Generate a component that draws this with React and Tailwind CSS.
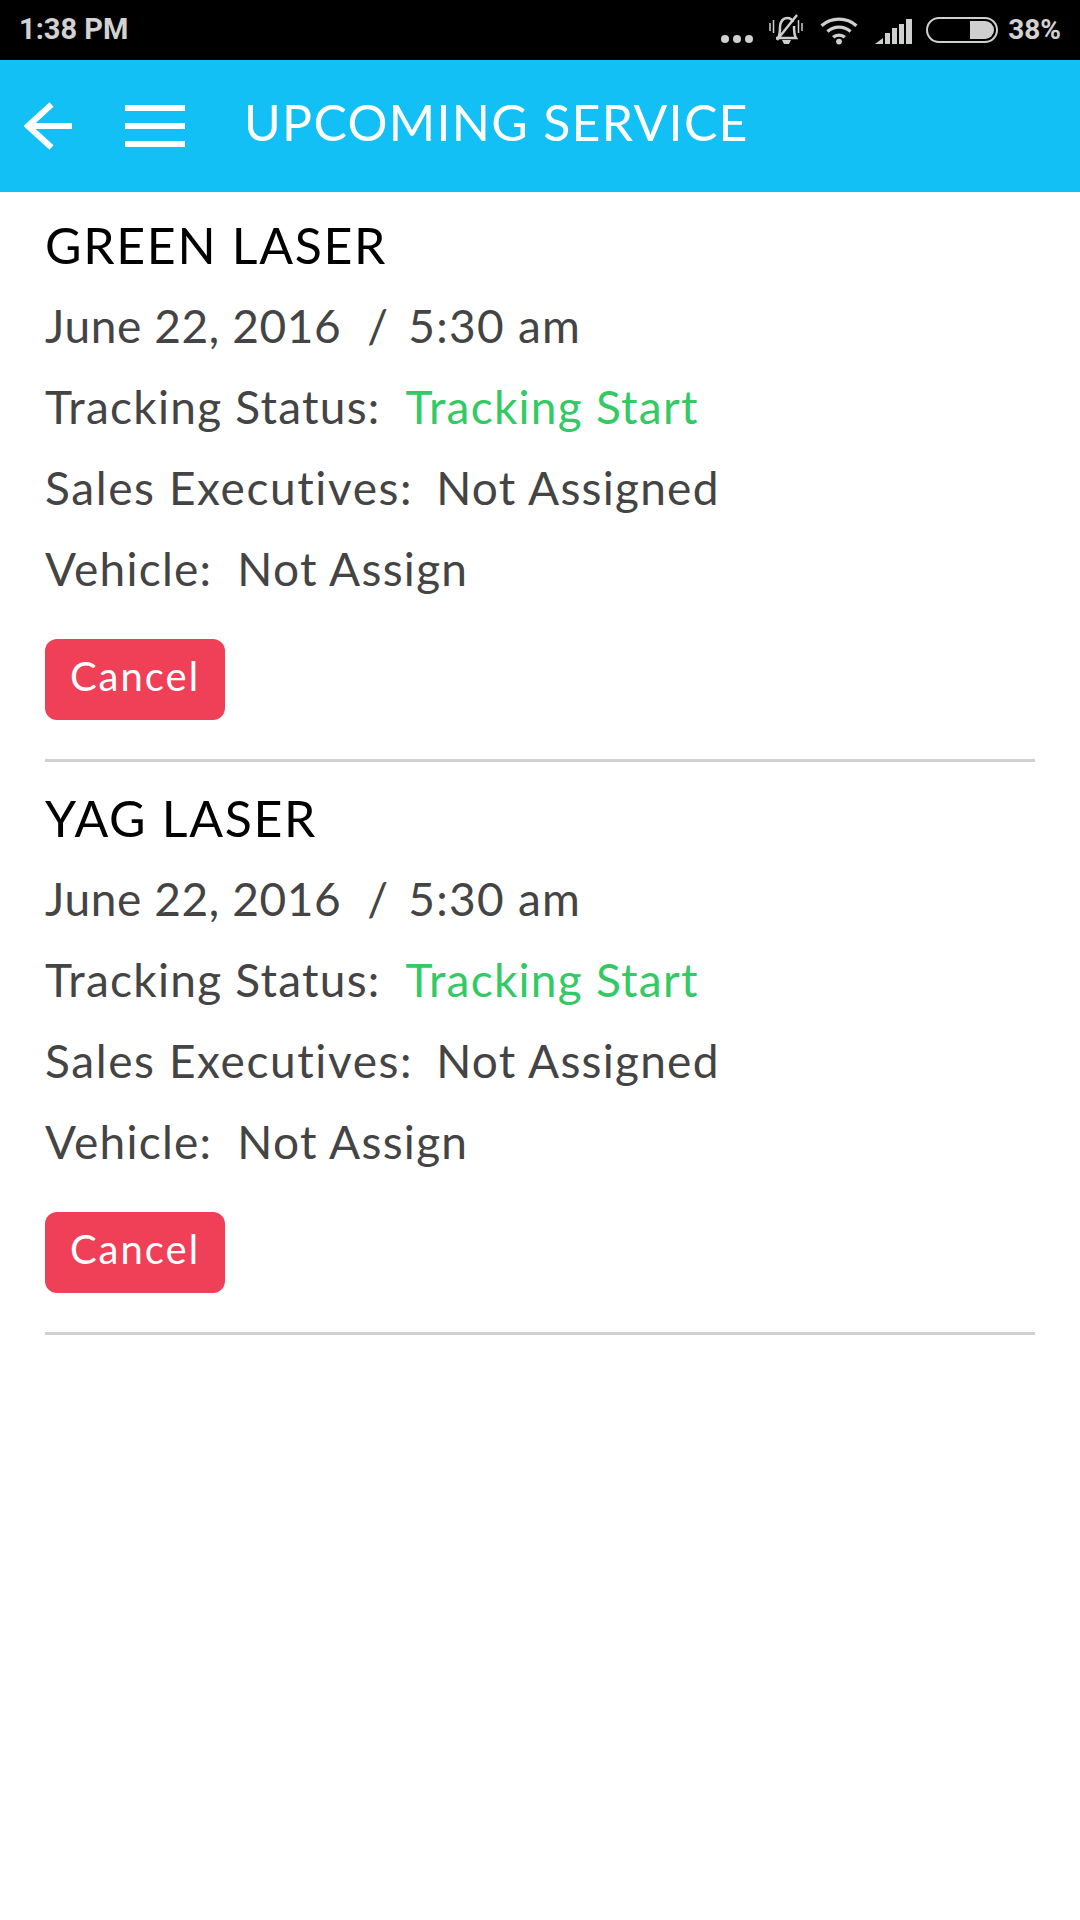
import React from "react";

const services = [
  { name: "GREEN LASER" },
  { name: "YAG LASER" },
];

function BackIcon() {
  return (
    <svg width="50" height="48" viewBox="0 0 50 48" fill="none" stroke="white" strokeWidth="6">
      <path d="M48 24H4" />
      <path d="M27.5 2.5L4 24L27.5 45.5" strokeLinecap="butt" />
    </svg>
  );
}

function MenuIcon() {
  return (
    <div className="flex flex-col justify-between w-[60px] h-[42px]">
      <div className="h-[6px] bg-white" />
      <div className="h-[6px] bg-white" />
      <div className="h-[6px] bg-white" />
    </div>
  );
}

function SilentBell() {
  return (
    <svg width="34" height="32" viewBox="0 0 34 32" fill="none" stroke="#cfcfcf" strokeWidth="2.5">
      <path d="M9 24c2-3 2-6 2-11 0-5 3-9 7-9 3 0 5 1 6 4M25 12c0 6 0 9 2 12H7" />
      <path d="M13 26h9l-2 4h-5z" fill="#cfcfcf" stroke="none" />
      <path d="M28 1L8 26" />
      <path d="M1 9v8M4.500 6v13M29.500 6v13M33 9v8" strokeWidth="1.5" />
    </svg>
  );
}

function WifiIcon() {
  return (
    <svg width="40" height="29" viewBox="0 0 40 30" fill="none" stroke="#cfcfcf" strokeWidth="3.500">
      <path d="M2 10c10-9 26-9 36 0" />
      <path d="M8 16c7-6 17-6 24 0" />
      <path d="M14 22c3-3 9-3 12 0" />
      <circle cx="20" cy="26.500" r="3" fill="#cfcfcf" stroke="none" />
    </svg>
  );
}

function SignalIcon() {
  return (
    <svg width="37" height="25" viewBox="0 0 37 25" fill="#cfcfcf">
      <path d="M0 25l8-6v6z" />
      <rect x="10" y="14" width="5" height="11" />
      <rect x="17" y="9" width="5" height="16" />
      <rect x="24" y="5" width="5" height="20" />
      <rect x="31" y="0" width="6" height="25" />
    </svg>
  );
}

function BatteryIcon() {
  return (
    <div className="w-[72px] h-[26px] rounded-full border-2 border-[#cfcfcf] flex justify-end p-[2px]">
      <div className="w-[24px] h-full bg-[#cfcfcf] rounded-r-full" />
    </div>
  );
}

function StatusBar() {
  return (
    <div className="h-[60px] bg-black flex items-center justify-between pl-[19px] pr-[19px] text-[#d2d2d2] font-['Roboto',sans-serif] font-bold text-[29px]">
      <span>1:38 PM</span>
      <div className="flex items-center">
        <div className="flex gap-[4px] mt-[18px] mr-[16px]">
          <span className="w-[8px] h-[8px] rounded-full bg-[#cfcfcf]" />
          <span className="w-[8px] h-[8px] rounded-full bg-[#cfcfcf]" />
          <span className="w-[8px] h-[8px] rounded-full bg-[#cfcfcf]" />
        </div>
        <div className="mr-[16px]"><SilentBell /></div>
        <div className="mr-[16px]"><WifiIcon /></div>
        <div className="mr-[14px] mt-[2px]"><SignalIcon /></div>
        <div className="mr-[10px]"><BatteryIcon /></div>
        <span className="text-[28px]">38%</span>
      </div>
    </div>
  );
}

function Row({ label, labelClass = "tracking-[1.25px] mr-[25px]", children }) {
  return (
    <div className="h-[81px] flex items-center text-[46px] tracking-[1.25px] text-[#444444]">
      {label && <span className={labelClass}>{label}</span>}
      {children}
    </div>
  );
}

function ServiceCard({ name }) {
  return (
    <div className="mx-[45px] mb-[3px] border-b-[3px] border-[#d0d0d0] h-[570px]">
      <div className="h-[93px] pt-[27px] leading-[52px] text-[50px] tracking-[1.7px] text-black">{name}</div>
      <div>
        <Row>
          <span className="tracking-[0.6px]">June 22, 2016</span>
          <span className="ml-[26px] mr-[19px]">/</span>
          <span>5:30 am</span>
        </Row>
        <Row label="Tracking Status:">
          <span className="text-[#33c964]">Tracking Start</span>
        </Row>
        <Row label="Sales Executives:" labelClass="tracking-[1.6px] mr-[23px]">
          <span>Not Assigned</span>
        </Row>
        <Row label="Vehicle:">
          <span>Not Assign</span>
        </Row>
      </div>
      <button className="mt-[30px] w-[180px] h-[81px] pb-[8px] rounded-[12px] bg-[#f04058] text-white text-[40px] tracking-[2px] flex items-center justify-center">
        Cancel
      </button>
    </div>
  );
}

export default function App() {
  return (
    <div className="min-h-[1920px] bg-white font-['Lato',sans-serif]">
      <StatusBar />
      <header className="h-[132px] bg-[#12c0f5] flex items-center text-white">
        <div className="ml-[24px]"><BackIcon /></div>
        <div className="ml-[51px]"><MenuIcon /></div>
        <h1 className="ml-[59px] pb-[8px] text-[50px] tracking-[1.3px] font-normal">UPCOMING SERVICE</h1>
      </header>
      {services.map((s) => (
        <ServiceCard key={s.name} name={s.name} />
      ))}
    </div>
  );
}
